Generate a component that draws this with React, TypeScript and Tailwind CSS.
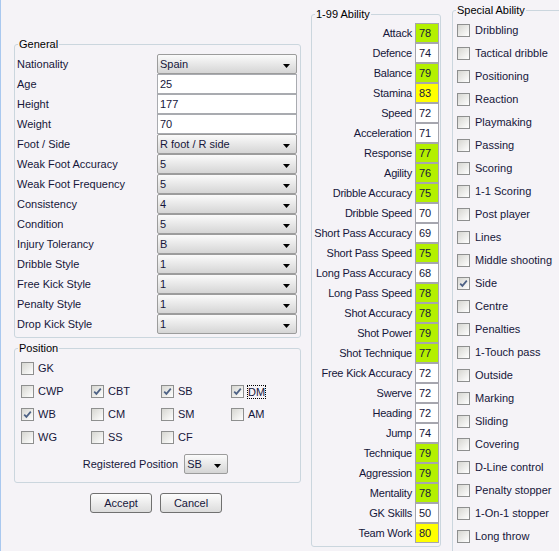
import React from "react";

const general: { label: string; value: string; kind: "select" | "input" }[] = [
  { label: "Nationality", value: "Spain", kind: "select" },
  { label: "Age", value: "25", kind: "input" },
  { label: "Height", value: "177", kind: "input" },
  { label: "Weight", value: "70", kind: "input" },
  { label: "Foot / Side", value: "R foot / R side", kind: "select" },
  { label: "Weak Foot Accuracy", value: "5", kind: "select" },
  { label: "Weak Foot Frequency", value: "5", kind: "select" },
  { label: "Consistency", value: "4", kind: "select" },
  { label: "Condition", value: "5", kind: "select" },
  { label: "Injury Tolerancy", value: "B", kind: "select" },
  { label: "Dribble Style", value: "1", kind: "select" },
  { label: "Free Kick Style", value: "1", kind: "select" },
  { label: "Penalty Style", value: "1", kind: "select" },
  { label: "Drop Kick Style", value: "1", kind: "select" },
];

const abilities: [string, number][] = [
  ["Attack", 78],
  ["Defence", 74],
  ["Balance", 79],
  ["Stamina", 83],
  ["Speed", 72],
  ["Acceleration", 71],
  ["Response", 77],
  ["Agility", 76],
  ["Dribble Accuracy", 75],
  ["Dribble Speed", 70],
  ["Short Pass Accuracy", 69],
  ["Short Pass Speed", 75],
  ["Long Pass Accuracy", 68],
  ["Long Pass Speed", 78],
  ["Shot Accuracy", 78],
  ["Shot Power", 79],
  ["Shot Technique", 77],
  ["Free Kick Accuracy", 72],
  ["Swerve", 72],
  ["Heading", 72],
  ["Jump", 74],
  ["Technique", 79],
  ["Aggression", 79],
  ["Mentality", 78],
  ["GK Skills", 50],
  ["Team Work", 80],
];

const specials = [
  "Dribbling",
  "Tactical dribble",
  "Positioning",
  "Reaction",
  "Playmaking",
  "Passing",
  "Scoring",
  "1-1 Scoring",
  "Post player",
  "Lines",
  "Middle shooting",
  "Side",
  "Centre",
  "Penalties",
  "1-Touch pass",
  "Outside",
  "Marking",
  "Sliding",
  "Covering",
  "D-Line control",
  "Penalty stopper",
  "1-On-1 stopper",
  "Long throw",
];

const positions: [string, boolean][][] = [
  [["GK", false]],
  [
    ["CWP", false],
    ["CBT", true],
    ["SB", true],
    ["DM", true],
  ],
  [
    ["WB", true],
    ["CM", false],
    ["SM", false],
    ["AM", false],
  ],
  [
    ["WG", false],
    ["SS", false],
    ["CF", false],
  ],
];

function Check({ checked }: { checked?: boolean }) {
  return (
    <span className="flex h-[13px] w-[13px] shrink-0 items-center justify-center border border-[#8e8f8f] bg-gradient-to-br from-[#d6d6d1] to-white">
      {checked && (
        <svg width="9" height="9" viewBox="0 0 9 9">
          <path d="M1.2 4.6 L3.4 6.9 L7.8 1.6" fill="none" stroke="#4d6185" strokeWidth="1.7" />
        </svg>
      )}
    </span>
  );
}

function Arrow() {
  return (
    <svg width="7" height="4" viewBox="0 0 7 4" className="mt-[3px] shrink-0">
      <path d="M0 0 H7 L3.5 4 Z" fill="#000" />
    </svg>
  );
}

function Select({ value, className = "" }: { value: string; className?: string }) {
  return (
    <div
      className={
        "flex h-[20px] items-center justify-between rounded-[2px] border border-[#9c9c9c] bg-gradient-to-b from-[#fbfbfb] via-[#e8e8e8] to-[#d5d5d5] pl-[2px] pr-[6px] " +
        className
      }
    >
      <span>{value}</span>
      <Arrow />
    </div>
  );
}

function Group({ title, className = "", children }: { title: string; className?: string; children: React.ReactNode }) {
  return (
    <div className={"relative rounded-[3px] border border-[#cbd6de] " + className}>
      <span className="absolute -top-[8px] left-[3px] whitespace-nowrap bg-[#f5f3f7] px-[1px] leading-[14px] text-[#000]">{title}</span>
      {children}
    </div>
  );
}

export default function App() {
  return (
    <div
      className="flex h-[551px] w-[559px] items-start overflow-hidden border-l border-[#a9c8ef] bg-[#f5f3f7] text-[11px] text-[#16163a]"
      style={{ fontFamily: '"Liberation Sans", Arial, sans-serif' }}
    >
      {/* left column */}
      <div className="ml-[13px] mt-[44px] flex w-[287px] shrink-0 flex-col">
        <Group title="General" className="h-[294px] pl-[2px] pr-[3px] pt-[9px]">
          {general.map((g) => (
            <div key={g.label} className="flex h-[20px] items-center">
              <span className="flex-1 whitespace-nowrap">{g.label}</span>
              {g.kind === "select" ? (
                <Select value={g.value} className="w-[140px]" />
              ) : (
                <div className="flex h-[20px] w-[140px] items-center border border-[#a9abb0] bg-white pl-[2px]">{g.value}</div>
              )}
            </div>
          ))}
        </Group>

        <Group title="Position" className="mt-[10px] h-[135px] pl-[6px] pt-[8px]">
          {positions.map((row, i) => (
            <div key={i} className="grid h-[23px] grid-cols-[70px_70px_70px_70px] items-center">
              {row.map(([name, on]) => (
                <div key={name} className="flex items-center gap-[4px]">
                  <Check checked={on} />
                  <span className={name === "DM" ? "outline outline-1 outline-dotted outline-black leading-[12px]" : ""}>{name}</span>
                </div>
              ))}
            </div>
          ))}
          <div className="mt-[5px] flex items-center justify-center gap-[6px] pr-[10px]">
            <span>Registered Position</span>
            <Select value="SB" className="w-[44px]" />
          </div>
        </Group>

        <div className="mt-[10px] flex justify-center gap-[8px] pr-[3px]">
          <button className="h-[20px] w-[62px] rounded-[3px] border border-[#707070] bg-gradient-to-b from-[#fdfdfd] to-[#dcdcdc] text-[#16163a]">
            Accept
          </button>
          <button className="h-[20px] w-[62px] rounded-[3px] border border-[#707070] bg-gradient-to-b from-[#fdfdfd] to-[#dcdcdc] text-[#16163a]">
            Cancel
          </button>
        </div>
      </div>

      {/* 1-99 ability */}
      <Group title="1-99 Ability" className="ml-[10px] mt-[14px] h-[533px] w-[130px] shrink-0 pr-[1px] pt-[8px]">
        {abilities.map(([name, v]) => (
          <div key={name} className="flex h-[20px] items-center">
            <span className="flex-1 whitespace-nowrap pr-[3px] text-right tracking-[-0.2px]">{name}</span>
            <span
              className={
                "flex h-[20px] w-[24px] shrink-0 items-center border border-[#a6a6ae] pl-[3px] " +
                (v >= 80 ? "bg-[#ffff00]" : v >= 75 ? "bg-[#b4f000]" : "bg-white")
              }
            >
              {v}
            </span>
          </div>
        ))}
      </Group>

      {/* special ability */}
      <Group title="Special Ability" className="ml-[11px] mt-[10px] h-[560px] w-[130px] shrink-0 pl-[4px] pt-[8px]">
        {specials.map((s) => (
          <div key={s} className="flex h-[23px] items-center gap-[5px]">
            <Check checked={s === "Side"} />
            <span className="whitespace-nowrap">{s}</span>
          </div>
        ))}
      </Group>
    </div>
  );
}
